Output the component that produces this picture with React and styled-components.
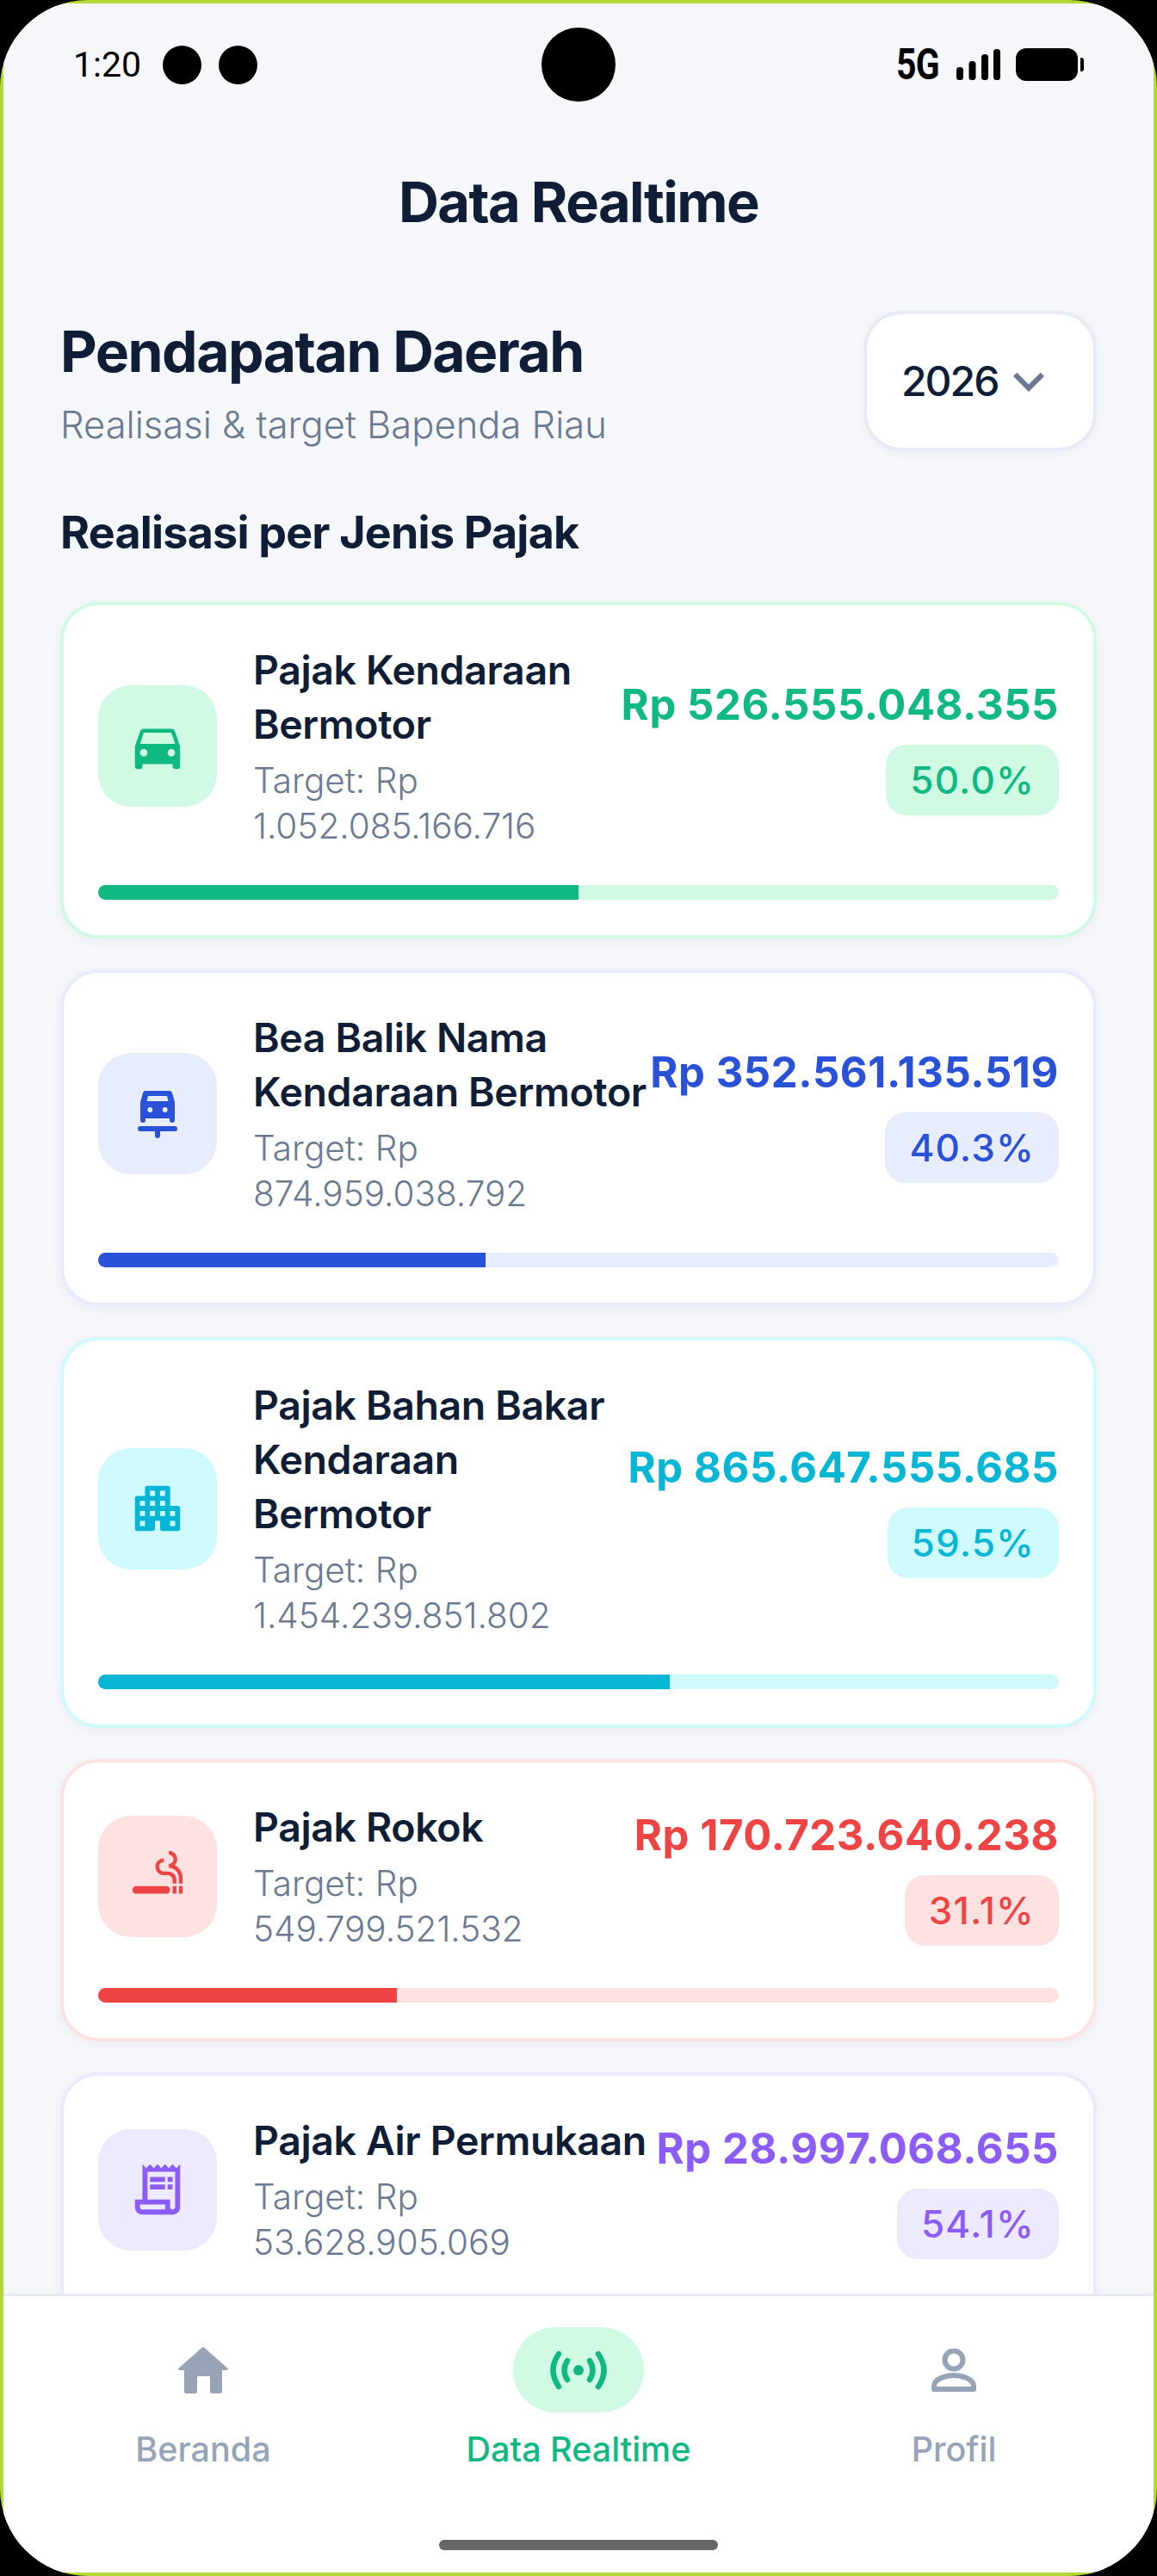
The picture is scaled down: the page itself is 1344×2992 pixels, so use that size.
import styled, { createGlobalStyle } from 'styled-components'
import React from 'react'
import { MdOutlineReceiptLong, MdDirectionsCar, MdKeyboardArrowDown } from 'react-icons/md'

const GlobalStyle = createGlobalStyle`
  html, body { margin: 0; padding: 0; background: #000; }
  * { box-sizing: border-box; }
  body { font-family: Inter, "Noto Sans", sans-serif; }
`

const CarRentalIcon = () => (
  <svg width="70" height="70" viewBox="0 0 70 70" fill="currentColor">
    <path fillRule="evenodd" d="M21 8h28a3 3 0 0 1 2.8 2L55 21v21a3 3 0 0 1-6 0v-2H21v2a3 3 0 0 1-6 0V21l3.2-11A3 3 0 0 1 21 8zM24 14l-1.5 6h25L46 14z" />
    <circle cx="26.3" cy="30" r="2.9" fill="#e8edfd" />
    <circle cx="43.7" cy="30" r="2.9" fill="#e8edfd" />
    <rect x="12" y="49" width="46" height="6" rx="3" />
    <rect x="32" y="49" width="6" height="14" rx="3" />
  </svg>
)

const ApartmentIcon = () => (
  <svg width="70" height="70" viewBox="0 0 24 24" fill="currentColor">
    <path fillRule="evenodd" d="M8 3h8a1 1 0 0 1 1 1v7h3a1 1 0 0 1 1 1v8a1 1 0 0 1-1 1h-6a1 1 0 0 1-1-1v-3h-2v3a1 1 0 0 1-1 1H4a1 1 0 0 1-1-1V8a1 1 0 0 1 1-1h3V4a1 1 0 0 1 1-1zM9 5v2h2V5zM13 5v2h2V5zM5 9v2h2V9zM9 9v2h2V9zM13 9v2h2V9zM5 13v2h2v-2zM9 13v2h2v-2zM13 13v2h2v-2zM17 13v2h2v-2zM5 17v2h2v-2zM17 17v2h2v-2z" />
  </svg>
)

const SmokingIcon = () => (
  <svg width="70" height="70" viewBox="0 0 24 24" fill="currentColor">
    <rect x="2" y="16" width="15" height="3" rx="1.5" />
    <rect x="18" y="16" width="1.5" height="3" />
    <rect x="20.5" y="16" width="1.5" height="3" />
    <path d="M18.85 7.73c.62-.61 1-1.45 1-2.38C19.85 3.5 18.35 2 16.5 2v1.5c1.02 0 1.85.83 1.85 1.85S17.52 7.2 16.5 7.2v1.5c2.24 0 4 1.83 4 4.07V15H22v-2.24c0-2.22-1.28-4.14-3.15-5.03zm-2.82 2.47H14.5c-1.02 0-1.85-.98-1.85-2s.83-1.75 1.85-1.75v-1.5c-1.85 0-3.35 1.5-3.35 3.35s1.5 3.35 3.35 3.35h1.53c1.05 0 1.97.74 1.97 2.05V15h1.5v-1.64c0-1.81-1.6-3.16-3.47-3.16z" />
  </svg>
)

const HomeIcon = () => (
  <svg width="58" height="54" viewBox="0 0 58 54" fill="currentColor">
    <path d="M27.4 1a2.4 2.4 0 0 1 3.2 0l26.6 23.4c1 1 .4 2.6-1 2.6H51v24.5a2.5 2.5 0 0 1-2.5 2.5H39.5a2.5 2.5 0 0 1-2.5-2.5V34H22v17.5a2.5 2.5 0 0 1-2.5 2.5H9.5A2.5 2.5 0 0 1 7 51.5V27H1.8c-1.4 0-2-1.6-1-2.6z" />
  </svg>
)

const LiveIcon = () => (
  <svg width="70" height="70" viewBox="-35 -35 70 70" fill="none" stroke="currentColor" strokeWidth="6.5" strokeLinecap="round">
    <circle cx="0" cy="0" r="6" fill="currentColor" stroke="none" />
    <path d="M-13 -11Q-20 0 -13 11M13 -11Q20 0 13 11" />
    <path d="M-23 -19Q-36 0 -23 19M23 -19Q36 0 23 19" />
  </svg>
)

const PersonIcon = () => (
  <svg width="52" height="50" viewBox="0 0 52 50" fill="none" stroke="currentColor" strokeWidth="6">
    <circle cx="26" cy="13" r="10.5" />
    <path d="M3 47v-4c0-8 14-12 23-12s23 4 23 12v4z" strokeLinejoin="round" />
  </svg>
)

const SignalIcon = () => (
  <svg width="51" height="36" viewBox="0 0 51 36" fill="#000">
    <rect x="0" y="21" width="8" height="15" rx="3.5" />
    <rect x="14.5" y="14" width="8" height="22" rx="3.5" />
    <rect x="29" y="6" width="8" height="30" rx="3.5" />
    <rect x="43" y="0" width="8" height="36" rx="3.5" />
  </svg>
)

const BatteryIcon = () => (
  <svg width="79" height="38" viewBox="0 0 79 38" fill="#000">
    <rect x="0" y="0" width="72" height="38" rx="12" />
    <path d="M75 11h1a3 3 0 0 1 3 3v10a3 3 0 0 1-3 3h-1z" />
  </svg>
)

const taxes = [
  {
    name: 'Pajak Kendaraan\nBermotor', target: 'Target: Rp\n1.052.085.166.716', amount: 'Rp 526.555.048.355',
    percent: 50.0, accent: '#10b981', tint: '#d1fae5', icon: <MdDirectionsCar size={70} />,
  },
  {
    name: 'Bea Balik Nama\nKendaraan Bermotor', target: 'Target: Rp\n874.959.038.792', amount: 'Rp 352.561.135.519',
    percent: 40.3, accent: '#2952d9', tint: '#e8edfd', icon: <CarRentalIcon />,
  },
  {
    name: 'Pajak Bahan Bakar\nKendaraan\nBermotor', target: 'Target: Rp\n1.454.239.851.802', amount: 'Rp 865.647.555.685',
    percent: 59.5, accent: '#06b6d4', tint: '#cffafe', icon: <ApartmentIcon />,
  },
  {
    name: 'Pajak Rokok', target: 'Target: Rp\n549.799.521.532', amount: 'Rp 170.723.640.238',
    percent: 31.1, accent: '#ef4444', tint: '#fee2e2', icon: <SmokingIcon />,
  },
  {
    name: 'Pajak Air Permukaan', target: 'Target: Rp\n53.628.905.069', amount: 'Rp 28.997.068.655',
    percent: 54.1, accent: '#8b5cf6', tint: '#ede9fe', icon: <MdOutlineReceiptLong size={70} />,
  },
]

function App() {
  return (
    <Frame>
      <GlobalStyle />
      <Screen>
        <StatusBar>
          <StatusLeft>
            <Clock>1:20</Clock>
            <NotifDot />
            <NotifDot />
          </StatusLeft>
          <Camera />
          <StatusRight>
            <Network>5G</Network>
            <SignalIcon />
            <BatteryIcon />
          </StatusRight>
        </StatusBar>

        <PageTitle>Data Realtime</PageTitle>

        <Content>
          <Header>
            <HeadingBlock>
              <Heading>Pendapatan Daerah</Heading>
              <Subheading>Realisasi &amp; target Bapenda Riau</Subheading>
            </HeadingBlock>
            <YearSelect>
              2026
              <MdKeyboardArrowDown size={72} color="#6b7a90" />
            </YearSelect>
          </Header>

          <SectionTitle>Realisasi per Jenis Pajak</SectionTitle>

          <CardList>
            {taxes.map((tax) => (
              <Card key={tax.name} $tint={tax.tint}>
                <CardRow>
                  <IconBox $tint={tax.tint} $accent={tax.accent}>{tax.icon}</IconBox>
                  <CardText>
                    <TaxName>{tax.name}</TaxName>
                    <TaxTarget>{tax.target}</TaxTarget>
                  </CardText>
                  <CardFigures>
                    <Amount $accent={tax.accent}>{tax.amount}</Amount>
                    <Badge $tint={tax.tint} $accent={tax.accent}>{tax.percent.toFixed(1)}%</Badge>
                  </CardFigures>
                </CardRow>
                <Track $tint={tax.tint}>
                  <Fill $accent={tax.accent} style={{ width: `${tax.percent}%` }} />
                </Track>
              </Card>
            ))}
          </CardList>
        </Content>

        <BottomNav>
          <NavItems>
            <NavItem>
              <NavIcon><HomeIcon /></NavIcon>
              <NavLabel>Beranda</NavLabel>
            </NavItem>
            <NavItem $active>
              <NavIcon $active><LiveIcon /></NavIcon>
              <NavLabel>Data Realtime</NavLabel>
            </NavItem>
            <NavItem>
              <NavIcon><PersonIcon /></NavIcon>
              <NavLabel>Profil</NavLabel>
            </NavItem>
          </NavItems>
          <HomeBar />
        </BottomNav>
      </Screen>
    </Frame>
  )
}

const Frame = styled.div`
  width: 1344px;
  height: 2992px;
  padding: 4px;
  background: #b4d934;
  border-radius: 102px;
  overflow: hidden;
`

const Screen = styled.div`
  display: flex;
  flex-direction: column;
  height: 100%;
  background: #f5f7fb;
  border-radius: 78px;
  overflow: hidden;
`

const StatusBar = styled.div`
  display: grid;
  grid-template-columns: 1fr auto 1fr;
  align-items: center;
  flex: none;
  height: 86px;
  margin-top: 28px;
  padding: 0 81px;
`

const StatusLeft = styled.div`
  display: flex;
  align-items: center;
  gap: 20px;
`

const StatusRight = styled.div`
  display: flex;
  align-items: center;
  justify-content: flex-end;
  gap: 18px;
`

const Clock = styled.span`
  margin-right: 5px;
  font-family: Roboto, sans-serif;
  font-size: 41px;
  line-height: 46px;
  color: #000;
`

const NotifDot = styled.span`
  width: 45px;
  height: 45px;
  border-radius: 50%;
  background: #000;
`

const Camera = styled.div`
  width: 86px;
  height: 86px;
  border-radius: 50%;
  background: #000;
`

const Network = styled.span`
  width: 52px;
  font-family: Roboto, sans-serif;
  font-weight: 700;
  font-size: 50px;
  line-height: 40px;
  letter-spacing: -1px;
  color: #000;
  transform: scaleX(0.82);
  transform-origin: left center;
  white-space: nowrap;
`

const PageTitle = styled.h1`
  flex: none;
  margin: 77px 0 0;
  font-size: 65px;
  line-height: 80px;
  font-weight: 700;
  letter-spacing: -1.6px;
  text-align: center;
  color: #0f1d36;
`

const Content = styled.main`
  display: flex;
  flex-direction: column;
  flex: 1;
  min-height: 0;
  padding: 0 66px;
  overflow: hidden;
`

const Header = styled.div`
  display: flex;
  justify-content: space-between;
  align-items: flex-start;
  flex: none;
  margin-top: 86px;
`

const HeadingBlock = styled.div`
  padding-top: 7px;
`

const Heading = styled.h2`
  margin: 0;
  font-size: 66px;
  line-height: 80px;
  font-weight: 700;
  letter-spacing: -1.5px;
  color: #0f1d36;
`

const Subheading = styled.p`
  margin: 15px 0 0;
  font-size: 43.5px;
  line-height: 60px;
  font-weight: 300;
  color: #6b7a90;
`

const YearSelect = styled.div`
  display: flex;
  align-items: center;
  width: 271px;
  height: 163px;
  padding-left: 40px;
  background: #fff;
  border: 4px solid #e6ebf5;
  border-radius: 44px;
  font-size: 48px;
  font-weight: 500;
  letter-spacing: -2px;
  color: #0f1d36;
  box-shadow: 0 4px 14px rgba(15, 29, 54, 0.03);
`

const SectionTitle = styled.h3`
  flex: none;
  margin: 60px 0 0;
  font-size: 52px;
  line-height: 70px;
  font-weight: 700;
  letter-spacing: -0.8px;
  color: #0f1d36;
`

const CardList = styled.div`
  display: flex;
  flex-direction: column;
  gap: 36px;
  margin-top: 45px;
`

const Card = styled.article`
  flex: none;
  padding: 44px 40px 41px;
  background: #fff;
  border: 4px solid ${(p) => p.$tint};
  border-radius: 44px;
  box-shadow: 0 4px 16px rgba(15, 29, 54, 0.04);
`

const CardRow = styled.div`
  display: flex;
  align-items: center;
`

const IconBox = styled.div`
  display: flex;
  align-items: center;
  justify-content: center;
  flex: none;
  width: 138px;
  height: 141px;
  margin-right: 42px;
  background: ${(p) => p.$tint};
  border-radius: 38px;
  color: ${(p) => p.$accent};
`

const CardText = styled.div`
  flex: 1;
  min-width: 0;
`

const TaxName = styled.div`
  font-size: 46.5px;
  line-height: 63px;
  font-weight: 600;
  letter-spacing: -0.4px;
  color: #0f1d36;
  white-space: pre-line;
`

const TaxTarget = styled.div`
  margin-top: 7px;
  font-size: 40.5px;
  line-height: 53px;
  font-weight: 300;
  color: #6b7a90;
  white-space: pre-line;
`

const CardFigures = styled.div`
  display: flex;
  flex-direction: column;
  align-items: flex-end;
  flex: none;
  gap: 13px;
`

const Amount = styled.div`
  font-size: 49px;
  line-height: 66px;
  font-weight: 700;
  letter-spacing: 0.6px;
  white-space: nowrap;
  color: ${(p) => p.$accent};
`

const Badge = styled.div`
  display: flex;
  align-items: center;
  height: 82px;
  padding: 0 28px;
  background: ${(p) => p.$tint};
  border-radius: 24px;
  font-size: 44px;
  font-weight: 500;
  letter-spacing: 1.2px;
  color: ${(p) => p.$accent};
`

const Track = styled.div`
  height: 17px;
  margin-top: 42px;
  background: ${(p) => p.$tint};
  border-radius: 9px;
  overflow: hidden;
`

const Fill = styled.div`
  height: 100%;
  background: ${(p) => p.$accent};
`

const BottomNav = styled.nav`
  flex: none;
  height: 324px;
  padding: 36px 14px 0;
  background: #fff;
  border-top: 3px solid #e7ebf4;
`

const NavItems = styled.div`
  display: grid;
  grid-template-columns: repeat(3, 1fr);
`

const NavItem = styled.div`
  display: flex;
  flex-direction: column;
  align-items: center;
  color: ${(p) => (p.$active ? '#10b981' : '#97a3b6')};
`

const NavIcon = styled.div`
  display: flex;
  align-items: center;
  justify-content: center;
  width: 152px;
  height: 99px;
  background: ${(p) => (p.$active ? '#d1fae5' : 'transparent')};
  border-radius: 50px;
`

const NavLabel = styled.span`
  margin-top: 17px;
  font-size: 39.5px;
  line-height: 52px;
  font-weight: 500;
`

const HomeBar = styled.div`
  width: 324px;
  height: 12px;
  margin: 79px auto 0;
  background: #666;
  border-radius: 6px;
`

export default App
